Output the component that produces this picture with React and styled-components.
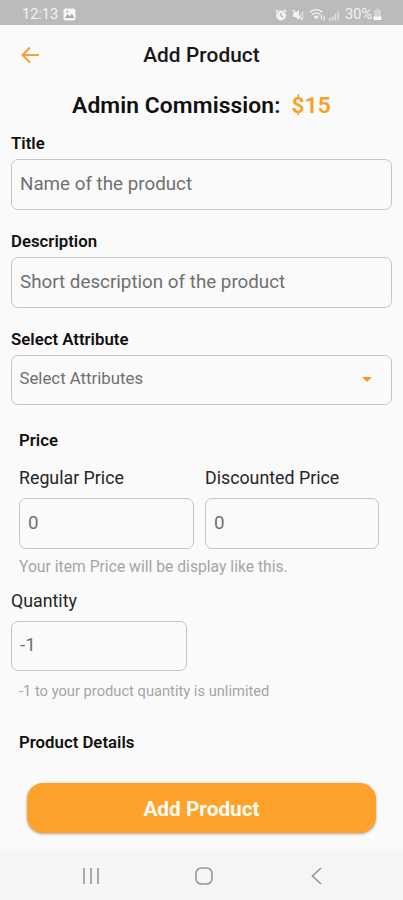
import styled, { createGlobalStyle } from "styled-components";

const GlobalStyle = createGlobalStyle`
  * {
    box-sizing: border-box;
  }

  body {
    margin: 0;
    background: #fafafa;
    font-family: Roboto, sans-serif;
  }
`;

const Screen = styled.div`
  display: flex;
  flex-direction: column;
  width: 403px;
  height: 900px;
  overflow: hidden;
  background: #fafafa;
  color: #171717;
`;

const StatusBar = styled.div`
  display: flex;
  flex-shrink: 0;
  align-items: center;
  justify-content: space-between;
  height: 25px;
  padding: 4px 21px 0 22px;
  background: #bbbbbb;
  color: #f3f3f3;
  font-size: 14.5px;
  line-height: 20px;
`;

const StatusGroup = styled.div`
  display: flex;
  align-items: center;
  gap: ${({ $gap }) => $gap}px;
`;

const Header = styled.header`
  display: grid;
  grid-template-columns: 60px 1fr 60px;
  align-items: center;
  flex-shrink: 0;
  height: 60px;
`;

const BackButton = styled.button`
  display: flex;
  margin: 0;
  padding: 0 0 0 20px;
  border: none;
  background: none;
`;

const PageTitle = styled.h1`
  margin: 0;
  font-size: 20.8px;
  font-weight: 500;
  line-height: 24px;
  letter-spacing: 0.1px;
  text-align: center;
`;

const Commission = styled.h2`
  display: flex;
  flex-shrink: 0;
  justify-content: center;
  gap: 11px;
  margin: 7px 0 12px;
  font-size: 22.8px;
  font-weight: 600;
  line-height: 28px;
  letter-spacing: 0.1px;
  color: #101010;
`;

const Amount = styled.span`
  color: #f9a023;
`;

const Form = styled.main`
  display: flex;
  flex-direction: column;
  flex: 1;
  padding: 0 11px;
`;

const Field = styled.div`
  display: flex;
  flex-direction: column;
  margin-bottom: ${({ $space }) => $space || 0}px;
`;

const FieldLabel = styled.div`
  height: 27px;
  padding-top: 1px;
  color: #111;
  font-size: 16.8px;
  font-weight: 600;
  line-height: 20px;
`;

const PlainLabel = styled.div`
  height: 30px;
  color: #262626;
  font-size: 17.8px;
  line-height: 20px;
`;

const Input = styled.div`
  display: flex;
  align-items: center;
  justify-content: space-between;
  width: ${({ $width }) => $width || "100%"};
  height: 50.5px;
  padding: 0 18px 1px 8px;
  border: 1px solid #c6c6c6;
  border-radius: 7px;
  color: #707070;
  font-size: 18.8px;
`;

const SelectInput = styled(Input)`
  padding-bottom: 3px;
  padding-left: 7.5px;
  font-size: 16.8px;
`;

const SectionTitle = styled.div`
  padding-left: 8px;
  color: #111;
  font-size: 16.8px;
  font-weight: 600;
  line-height: 20px;
`;

const PriceRow = styled.div`
  display: grid;
  grid-template-columns: 175px 174px;
  gap: 11px;
  padding: 18px 0 8px 8px;
`;

const Hint = styled.div`
  padding-left: 8px;
  color: #a5a5a5;
  font-size: ${({ $size }) => $size}px;
  line-height: 20px;
`;

const SubmitButton = styled.button`
  flex-shrink: 0;
  height: 50px;
  margin: 0 27px 18px;
  padding: 1px 0 0;
  border: none;
  border-radius: 16px;
  background: #ffa22b;
  box-shadow: 0 1px 3px rgba(0, 0, 0, 0.35);
  color: #fffdf5;
  font-family: inherit;
  font-size: 20.8px;
  font-weight: 700;
`;

const NavBar = styled.nav`
  display: flex;
  flex-shrink: 0;
  align-items: center;
  justify-content: space-between;
  height: 49px;
  padding: 0 78px;
  background: #f5f5f5;
`;

const Icon = styled.svg`
  display: block;
  flex-shrink: 0;
`;

function PhotoIcon() {
  return (
    <Icon width="13" height="13" viewBox="0 0 13 13">
      <rect x="0.5" y="0.5" width="12" height="12" rx="2" fill="#f6f6f6" />
      <path d="M2 10l2.5-4 2.3 2.2L9 5.8 11.2 10z" fill="#aaa" />
      <circle cx="4.2" cy="3.5" r="1" fill="#aaa" />
    </Icon>
  );
}

function AlarmIcon() {
  return (
    <Icon width="12" height="12" viewBox="0 0 12 12">
      <path d="M0.8 2.6L3 0.8M11.2 2.6L9 0.8" stroke="#f1f1f1" strokeWidth="1.6" />
      <circle cx="6" cy="6.5" r="4.9" fill="#f1f1f1" />
      <path d="M6 3.8v3l2 1" fill="none" stroke="#aaa" strokeWidth="1.1" />
    </Icon>
  );
}

function MuteIcon() {
  return (
    <Icon width="12" height="12" viewBox="0 0 12 12">
      <path d="M1 4h2.4L7 1v10L3.4 8H1z" fill="#f1f1f1" />
      <path d="M1 1l9.5 10" stroke="#f1f1f1" strokeWidth="1.3" />
      <path d="M9 3.5v4M10.8 2v8" stroke="#e6e6e6" strokeWidth="1" />
    </Icon>
  );
}

function WifiIcon() {
  return (
    <Icon width="17" height="13" viewBox="0 0 17 13" fill="none" stroke="#efefef">
      <path d="M1 4.3C4.5 0.8 10 0.8 13.5 4.3" strokeWidth="1.5" />
      <path d="M3.2 6.8C5.7 4.4 9 4.4 11.4 6.8" strokeWidth="1.5" />
      <path d="M5.2 8.7l2.1 2.3 2.1-2.3c-1.3-1-2.9-1-4.2 0z" fill="#efefef" />
      <path d="M12.5 7v4.5M15 8v4.5" strokeWidth="1.2" />
    </Icon>
  );
}

function SignalIcon() {
  return (
    <Icon width="11" height="12" viewBox="0 0 11 12" fill="#e2e2e2">
      <rect x="0" y="9" width="1.7" height="2.5" />
      <rect x="2.8" y="7.5" width="1.7" height="4" />
      <rect x="5.6" y="5" width="1.7" height="6.5" />
      <rect x="8.4" y="1.5" width="1.7" height="10" opacity="0.7" />
    </Icon>
  );
}

function BatteryIcon() {
  return (
    <Icon width="9" height="13" viewBox="0 0 9 13">
      <path d="M3 0.5h3v1.4h2V12H1V1.9h2z" fill="#d2d2d2" />
      <path d="M0.5 8.5h8V12h-8z" fill="#fafafa" />
    </Icon>
  );
}

export default function App() {
  return (
    <>
      <GlobalStyle />
      <Screen>
        <StatusBar>
          <StatusGroup $gap={5}>
            <span>12:13</span>
            <PhotoIcon />
          </StatusGroup>
          <StatusGroup $gap={5}>
            <AlarmIcon />
            <MuteIcon />
            <StatusGroup $gap={3}>
              <WifiIcon />
              <SignalIcon />
            </StatusGroup>
            <StatusGroup $gap={1}>
              <span>30%</span>
              <BatteryIcon />
            </StatusGroup>
          </StatusGroup>
        </StatusBar>

        <Header>
          <BackButton aria-label="Back">
            <Icon width="20" height="18" viewBox="0 0 20 18" fill="none" stroke="#f9a12f" strokeWidth="2">
              <path d="M10 1.5L2.5 9l7.5 7.5M2.5 9H19" />
            </Icon>
          </BackButton>
          <PageTitle>Add Product</PageTitle>
        </Header>

        <Commission>
          <span>Admin Commission:</span>
          <Amount>$15</Amount>
        </Commission>

        <Form>
          <Field $space={20.5}>
            <FieldLabel>Title</FieldLabel>
            <Input>Name of the product</Input>
          </Field>
          <Field $space={20}>
            <FieldLabel>Description</FieldLabel>
            <Input>Short description of the product</Input>
          </Field>
          <Field $space={25}>
            <FieldLabel>Select Attribute</FieldLabel>
            <SelectInput>
              Select Attributes
              <Icon width="12" height="7" viewBox="0 0 12 7">
                <path d="M1 2h10L6 7z" fill="#f59b1d" />
              </Icon>
            </SelectInput>
          </Field>

          <SectionTitle>Price</SectionTitle>
          <PriceRow>
            <Field>
              <PlainLabel>Regular Price</PlainLabel>
              <Input>0</Input>
            </Field>
            <Field>
              <PlainLabel>Discounted Price</PlainLabel>
              <Input>0</Input>
            </Field>
          </PriceRow>
          <Field $space={14}>
            <Hint $size={15.7}>Your item Price will be display like this.</Hint>
          </Field>

          <Field $space={10}>
            <PlainLabel>Quantity</PlainLabel>
            <Input $width="175.5px">-1</Input>
          </Field>
          <Field $space={31}>
            <Hint $size={14.7}>-1 to your product quantity is unlimited</Hint>
          </Field>

          <SectionTitle>Product Details</SectionTitle>
        </Form>

        <SubmitButton>Add Product</SubmitButton>

        <NavBar>
          <Icon width="26" height="20" viewBox="0 0 26 20" stroke="#969696" strokeWidth="1.6">
            <path d="M6 2v16M13 2v16M20 2v16" />
          </Icon>
          <Icon width="20" height="20" viewBox="0 0 20 20" fill="none" stroke="#969696" strokeWidth="1.6">
            <rect x="1" y="2" width="16" height="16" rx="5.5" />
          </Icon>
          <Icon width="20" height="20" viewBox="0 0 20 20" fill="none" stroke="#969696" strokeWidth="1.6">
            <path d="M16 2L7.5 10l8.5 8" />
          </Icon>
        </NavBar>
      </Screen>
    </>
  );
}
